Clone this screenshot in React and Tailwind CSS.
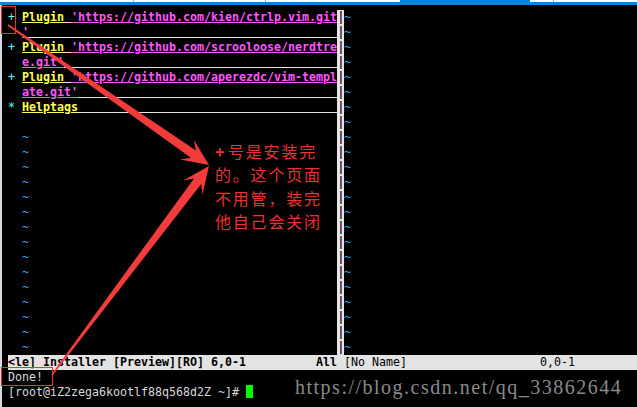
import React from 'react';

const mono = { fontFamily: '"DejaVu Sans Mono", monospace' };

// tapered screenshot-tool arrow, tail -> tip
const arrowPoints = (x1, y1, x2, y2) => {
  const dx = x2 - x1, dy = y2 - y1;
  const L = Math.hypot(dx, dy);
  const ux = dx / L, uy = dy / L, nx = -uy, ny = ux;
  const h = 27, hw = 12, w0 = 0.8, w1 = 4.5, notch = 8;
  const P = (t, s) => `${(x1 + ux * t + nx * s).toFixed(1)},${(y1 + uy * t + ny * s).toFixed(1)}`;
  return [P(0, w0), P(L - h + notch, w1), P(L - h, hw), P(L, 0), P(L - h, -hw), P(L - h + notch, -w1), P(0, -w0)].join(' ');
};

const ul = 'underline decoration-1 underline-offset-[1px]';

const Line = ({ children }) => (
  <div className="h-[15px] leading-[15px] whitespace-pre">{children}</div>
);

const Plus = () => <span className="text-[#55ffff]">+ </span>;

const PluginLine = ({ url }) => (
  <Line>
    <Plus />
    <span className={`font-bold text-[#ffff55] ${ul}`}>Plugin</span>
    <span className={`text-[#e6e6e6] ${ul}`}> </span>
    <span className={`font-bold text-[#ff55ff] ${ul}`}>{url}</span>
  </Line>
);

const WrapLine = ({ text, color = 'text-[#ff55ff]' }) => (
  <Line>
    <span>{'  '}</span>
    <span className={`font-bold ${color} ${ul}`}>{text}</span>
    <span className={`text-[#e6e6e6] ${ul}`}>{' '.repeat(45 - text.length)}</span>
  </Line>
);

const Tilde = ({ pad = '' }) => (
  <Line>
    <span className="text-[#3aa3f0]">{pad}~</span>
  </Line>
);

export default function App() {
  const rows = 23;
  return (
    <div className="relative w-[637px] h-[407px] bg-black overflow-hidden text-[11.63px] text-[#d8d8d8]" style={mono}>
      {/* window chrome strip */}
      <div className="h-[5px] bg-[#0a84d8]">
        <div className="flex h-[2px]">
          <div className="w-[134px] bg-white border-r border-[#b0b0b0]" />
          <div className="w-[132px] bg-white border-r border-[#b0b0b0]" />
          <div className="w-[134px] bg-white" />
          <div className="w-[130px]" />
          <div className="w-[24px] bg-white border-r border-[#b0b0b0]" />
          <div className="flex-1 bg-white" />
        </div>
      </div>

      <div className="flex h-[402px]">
        <div className="w-[2px] bg-[#d6dbe3]" />
        <div className="flex-1 pt-[5px] pl-[6px] flex flex-col">
          <div className="flex">
            {/* left window */}
            <div className="w-[329px] flex flex-col">
              <PluginLine url="'https://github.com/kien/ctrlp.vim.git" />
              <WrapLine text="'" />
              <PluginLine url="'https://github.com/scrooloose/nerdtre" />
              <WrapLine text="e.git'" />
              <PluginLine url="'https://github.com/aperezdc/vim-templ" />
              <WrapLine text="ate.git'" />
              <Line>
                <span className="text-[#55ffff]">* </span>
                <span className={`font-bold text-[#ffff55] ${ul}`}>Helptags</span>
                <span className={`text-[#e6e6e6] ${ul}`}>{' '.repeat(37)}</span>
              </Line>
              <Line> </Line>
              {Array.from({ length: 15 }).map((_, i) => (
                <Tilde key={i} pad="  " />
              ))}
            </div>
            {/* vertical split */}
            <div className="w-[7px] bg-[#e4e4e4] flex flex-col">
              {Array.from({ length: rows }).map((_, i) => (
                <div key={i} className="h-[15px] flex justify-center py-[1px]">
                  <div className="w-[1px] bg-[#9a3b3b]" />
                  <div className="w-[1px] bg-[#3d6a9c]" />
                </div>
              ))}
            </div>
            {/* right window */}
            <div className="flex-1 flex flex-col">
              {Array.from({ length: rows }).map((_, i) => (
                <Tilde key={i} />
              ))}
            </div>
          </div>

          {/* status lines */}
          <div className="flex h-[15px] leading-[15px] whitespace-pre bg-[#e3e3e3] text-black">
            <div className="w-[336px] font-bold">{'<le] Installer [Preview][RO] 6,0-1          All'}</div>
            <div className="flex-1">{'[No Name]                   0,0-1'}</div>
          </div>
          <Line>Done!</Line>
          <Line>
            {'[root@iZ2zega6kootlf88q568d2Z ~]# '}
            <span className="inline-block align-top w-[7px] h-[13px] bg-[#00ff00]" />
          </Line>
        </div>
      </div>

      {/* watermark */}
      <div
        className="absolute left-[295px] top-[375px] text-[20px] leading-[24px] tracking-[1.5px] text-[#8a8a8a] whitespace-pre"
        style={{ fontFamily: '"Liberation Serif", serif' }}
      >
        https://blog.csdn.net/qq_33862644
      </div>

      {/* annotation text */}
      <div
        className="absolute left-[215px] top-[140px] text-[16px] leading-[23.3px] tracking-[1.8px] text-[#e8332f] whitespace-pre"
        style={{ fontFamily: '"Noto Sans CJK SC", sans-serif' }}
      >
        <div><span className="inline-block w-[13px] font-bold">+</span>号是安装完</div>
        <div>的。这个页面</div>
        <div>不用管，装完</div>
        <div>他自己会关闭</div>
      </div>

      {/* annotation shapes */}
      <svg className="absolute inset-0 pointer-events-none" width="637" height="407" viewBox="0 0 637 407">
        <rect x="1.5" y="6.5" width="14" height="27" fill="none" stroke="#ff2d2d" strokeWidth="1" />
        <rect x="1.5" y="367.5" width="51" height="18" fill="none" stroke="#ff2d2d" strokeWidth="1" />
        <polygon points={arrowPoints(8, 25, 209, 165)} fill="#f23c3c" />
        <polygon points={arrowPoints(52, 375, 209, 166)} fill="#f23c3c" />
      </svg>
    </div>
  );
}
